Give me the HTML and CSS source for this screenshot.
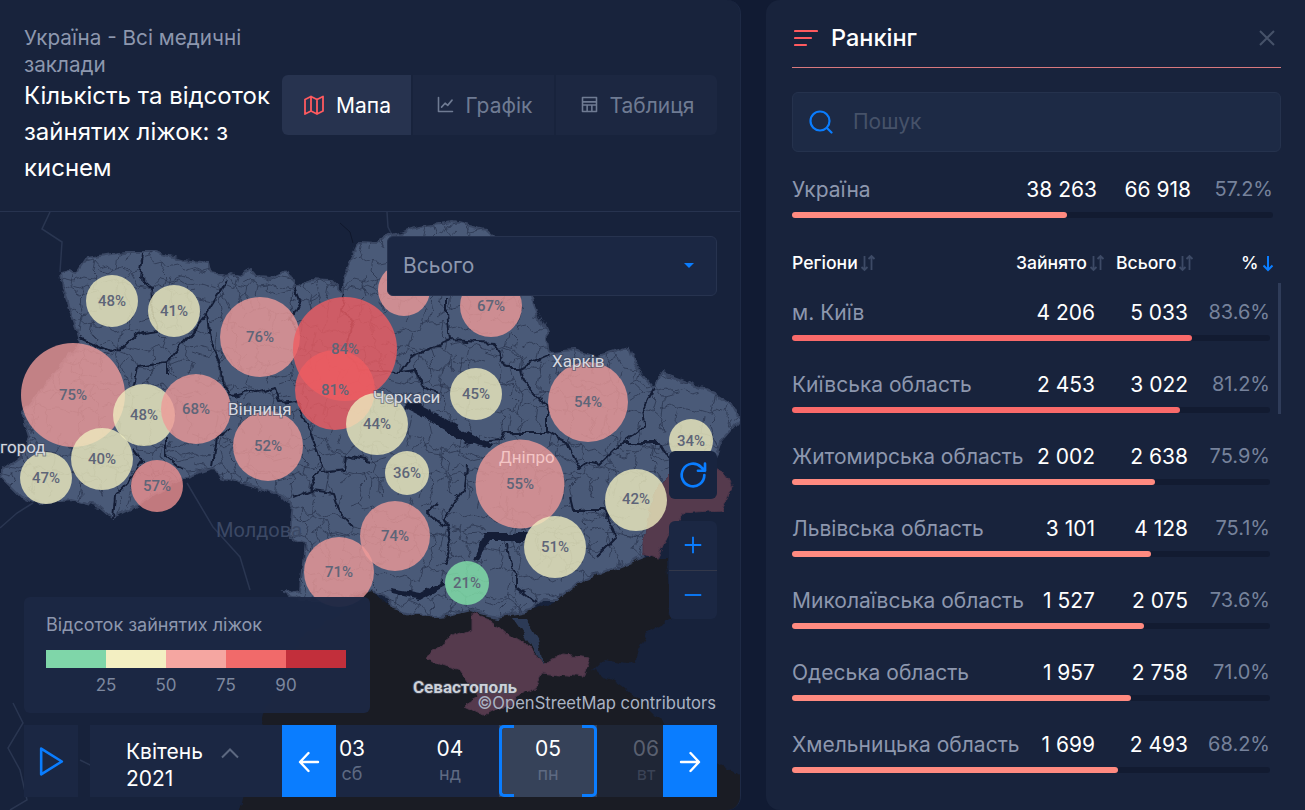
FILE: index.html
```html
<!DOCTYPE html>
<html lang="uk">
<head>
<meta charset="utf-8">
<title>Ранкінг</title>
<link rel="stylesheet" href="styles.css">
</head>
<body>
<div class="app">
  <section class="left">
    <header class="head">
      <div class="titles">
        <div class="crumb">Україна - Всі медичні заклади</div>
        <h1 class="title">Кількість та відсоток зайнятих ліжок: з киснем</h1>
      </div>
      <nav class="tabs">
        <div class="tab tab-on">
          <svg class="tab-ico" viewBox="0 0 24 24"><path d="M3 6.5 9 3.5l6 3 6-3v14.500l-6 3-6-3-6 3zM9 3.500v14.500M15 6.500v14.500"/></svg>Мапа
        </div>
        <div class="tab tab-graph">
          <svg class="tab-ico" viewBox="0 0 24 24"><path d="M4 4v16h16M7.500 15l4-4.500 3 2.500 5-6"/></svg>Графік
        </div>
        <div class="tab tab-table">
          <svg class="tab-ico" viewBox="0 0 24 24"><path d="M4 4h16v16H4zM4 9h16M4 12.500h16M9.300 12.500V20M14.700 12.500V20"/></svg>Таблиця
        </div>
      </nav>
    </header>
    <div class="map">
      <svg class="map-svg" viewBox="0 212 741 598">
        <defs>
          <pattern id="districts" width="70" height="62" patternUnits="userSpaceOnUse">
            <path d="M0 12l9-3 6 5 8-2 5 6 9-2 7 6 10-3 9 4 7-2M23 12l-2 11 6 6-3 10 7 6-2 11 5 6M0 38l10 3 7-4 7 3M31 35l9-3 8 5 9-1 13 4M48 37l-2 11 5 6-2 8M12 62l-2-10 5-5-3-9M58 12l3-12M12 0l-3 9M37 45l-6 5 1 12" fill="none" stroke="#2b3650" stroke-width=".8"/>
          </pattern>
          <pattern id="districts2" width="97" height="83" patternUnits="userSpaceOnUse">
            <path d="M0 20l12 4 9-6 13 5 7 13 14 2 8-9 12 3 10-4 12 3M21 18l3-18M55 38l-3 14 9 8 13-3 7 9-2 17M34 23l-9 11 4 14-11 5-18-4M29 48l8 13-5 22M61 60l-12 8M81 66l16-3M74 26l-3 14 10 6 16-4" fill="none" stroke="#2b3650" stroke-width=".8"/>
          </pattern>
          <filter id="rough" filterUnits="userSpaceOnUse" x="-20" y="190" width="790" height="640" color-interpolation-filters="sRGB">
            <feTurbulence type="fractalNoise" baseFrequency=".07" numOctaves="3" seed="4"/>
            <feDisplacementMap in="SourceGraphic" scale="9" xChannelSelector="R" yChannelSelector="G"/>
          </filter>
          <path id="ua" d="M60 272L68 270 78 273 88 258 123 252 157 252 182 260 208 263 210 272 227 275 232 273 240 275 250 269 258 278 270 279 287 271 295 288 310 279 330 280 345 295 343 277 360 242 377 243 383 238 418 227 453 222 486 230 520 260 533 300 547 333 550 352 573 350 597 357 628 348 633 362 653 387 663 373 687 382 713 393 732 405 740 420 720 443 712 466 680 468 665 490 650 540 643 557 617 567 583 580 557 600 543 600 530 610 517 613 497 617 487 615 470 610 450 615 423 617 393 608 385 595 373 590 345 600 300 600 283 593 300 590 305 543 290 537 293 503 267 490 220 477 213 467 183 477 130 510 113 518 100 507 72 500 37 503 20 497 0 477 3 470 20 457 30 437 23 413 80 343 75 325 62 287z"/>
        </defs>
        <path class="map-bound" d="M50 212L42 229 62 242 60 272M387 212L388 227 393 237M0 528L17 513 33 503M187 483L213 527 240 557 250 590M13 703L23 723 8 748 20 770 27 800 10 810M80 760L90 765 100 760"/>
        <path class="map-river-line" d="M340 223L350 232 353 243"/>
        <g filter="url(#rough)">
          <path class="map-black" d="M373 590L393 608 423 617 470 610 530 610 557 600 583 580 617 567 643 557 667 557 670 620 647 633 633 663 604 658 592 670 613 680 640 700 680 740 717 762 760 790 760 830 235 830 265 713 300 640z"/>
          <path class="map-occupied" d="M472 613L490 620 512 638 526 643 542 663 561 655 590 658 583 677 542 672 533 690 486 715 465 705 479 697 460 670 425 658 453 637 472 630z"/>
          <path class="map-strait" d="M512 618L527 640 543 664 538 640 525 618z"/>
          <use href="#ua" fill="#4a5a78" stroke="#3a4763" stroke-width="2"/>
          <use href="#ua" fill="url(#districts)"/>
          <use href="#ua" fill="url(#districts2)"/>
          <path class="map-occupied" d="M655 490L675 470 718 467 728 480 732 488 722 510 683 513 668 535 657 558 643 553 643 543 650 510z"/>
          <path class="map-regions" d="M143 253L140 278 153 290 150 310 158 330 143 332 133 337 123 347 110 352 80 338M227 280L215 300 207 313 210 340 222 368 223 383 233 397 275 387 280 402 297 400 303 418 310 430 322 467 310 490 293 497M207 313L167 362 137 367 132 387M167 362V375M167 437V457L183 470M217 437L213 465M233 428L217 437M113 518L115 497 133 477 143 462 133 450M322 473L345 470 347 455 370 460M310 490L333 493 340 513 353 527M447 297V313L450 340 410 357 400 372 415 370 422 387 440 393M450 340L493 343 508 368 520 368 550 355M520 368L523 380 540 397 547 413 547 433 503 433 500 440 470 443 457 437M547 433L567 443 580 468 587 462 600 465 623 443 645 427 643 407 653 387M623 443L660 443 670 460M467 467L465 487 443 520 448 533 450 547 443 563M570 497L573 510 603 510 617 537 597 557M507 543L510 567 517 573 517 587 537 603M437 503L427 513 445 528M295 288L300 300 290 320 300 335M345 295L340 310 355 320 345 350 360 370 400 372"/>
          <path class="map-water" d="M403 407L425 418 457 437 490 450 493 445 460 428 430 410 410 400zM483 533L527 533 525 541 490 541 478 560 473 562zM390 588L420 593 443 580 445 586 420 600 392 594z"/>
        </g>
        <circle class="blob blob-y" cx="112" cy="301" r="26"/>
        <circle class="blob blob-y" cx="174" cy="311" r="26"/>
        <circle class="blob blob-p" cx="260" cy="337" r="40"/>
        <circle class="blob blob-r" cx="345" cy="349" r="52"/>
        <circle class="blob blob-r" cx="335" cy="390" r="40"/>
        <circle class="blob blob-p" cx="73" cy="395" r="52"/>
        <circle class="blob blob-y" cx="144" cy="415" r="31"/>
        <circle class="blob blob-p" cx="196" cy="409" r="35"/>
        <circle class="blob blob-p" cx="268" cy="446" r="35"/>
        <circle class="blob blob-y" cx="102" cy="459" r="31"/>
        <circle class="blob blob-y" cx="46" cy="478" r="26"/>
        <circle class="blob blob-d" cx="157" cy="486" r="26"/>
        <circle class="blob blob-p" cx="339" cy="572" r="35"/>
        <circle class="blob blob-p" cx="404" cy="290" r="26"/>
        <circle class="blob blob-p" cx="491" cy="306" r="31"/>
        <circle class="blob blob-y" cx="476" cy="394" r="26"/>
        <circle class="blob blob-p" cx="588" cy="402" r="40"/>
        <circle class="blob blob-y" cx="377" cy="424" r="31"/>
        <circle class="blob blob-y" cx="407" cy="473" r="22"/>
        <circle class="blob blob-p" cx="520" cy="484" r="44.500"/>
        <circle class="blob blob-y" cx="691" cy="441" r="22"/>
        <circle class="blob blob-y" cx="636" cy="500" r="31"/>
        <circle class="blob blob-p" cx="395" cy="536" r="35"/>
        <circle class="blob blob-y" cx="555" cy="547" r="31"/>
        <circle class="blob blob-g" cx="467" cy="583" r="22"/>
        <text class="place" x="0" y="453">город</text>
        <text class="place" x="228" y="415">Вінниця</text>
        <text class="place" x="373" y="403">Черкаси</text>
        <text class="place" x="552" y="367">Харків</text>
        <text class="place place-under" x="499" y="463">Дніпро</text>
        <text class="place place-dim" x="216" y="537">Молдова</text>
        <text class="place place-bold" x="413" y="693">Севастополь</text>
        <g class="pcts">
          <text x="112" y="306">48%</text><text x="174" y="316">41%</text><text x="260" y="342">76%</text>
          <text x="345" y="354">84%</text><text x="335" y="395">81%</text><text x="73" y="400">75%</text>
          <text x="144" y="420">48%</text><text x="196" y="414">68%</text><text x="268" y="451">52%</text>
          <text x="102" y="464">40%</text><text x="46" y="483">47%</text><text x="157" y="491">57%</text>
          <text x="339" y="577">71%</text><text x="491" y="311">67%</text><text x="476" y="399">45%</text>
          <text x="588" y="407">54%</text><text x="377" y="429">44%</text><text x="407" y="478">36%</text>
          <text x="520" y="489">55%</text><text x="691" y="446">34%</text><text x="636" y="504">42%</text>
          <text x="395" y="541">74%</text><text x="555" y="552">51%</text><text x="467" y="588">21%</text>
        </g>
      </svg>

      <div class="select">Всього<span class="caret"></span></div>

      <div class="map-btn refresh">
        <svg viewBox="0 0 24 24"><path d="M20.500 12a8.500 8.500 0 1 1-2.500-6l3 2.800M21 3.500v5.300h-5.300"/></svg>
      </div>
      <div class="zoomer">
        <div class="zoom-btn"><svg viewBox="0 0 24 24"><path d="M12 3v18M3 12h18"/></svg></div>
        <div class="zoom-btn"><svg viewBox="0 0 24 24"><path d="M3 12h18"/></svg></div>
      </div>

      <div class="legend">
        <div class="legend-title">Відсоток зайнятих ліжок</div>
        <div class="legend-bar">
          <span class="seg seg-1"></span><span class="seg seg-2"></span><span class="seg seg-3"></span><span class="seg seg-4"></span><span class="seg seg-5"></span>
        </div>
        <div class="legend-nums"><span>25</span><span>50</span><span>75</span><span>90</span></div>
      </div>

      <div class="attrib">©OpenStreetMap contributors</div>

      <div class="dates">
        <div class="play"><svg viewBox="0 0 24 30"><path d="M2 2.500 22 15 2 27.500z"/></svg></div>
        <div class="month">
          <div class="month-text">Квітень<br>2021</div>
          <svg class="chev" viewBox="0 0 20 12"><path d="M2 10.500 10 2.500l8 8"/></svg>
        </div>
        <div class="arrow"><svg viewBox="0 0 24 24"><path d="M21 12H3.500M11.500 3 3 12l8.500 9"/></svg></div>
        <div class="strip">
          <div class="days">
            <div class="day"><b>03</b><span>сб</span></div>
            <div class="day"><b>04</b><span>нд</span></div>
            <div class="day day-on"><b>05</b><span>пн</span></div>
            <div class="day day-off"><b>06</b><span>вт</span></div>
          </div>
        </div>
        <div class="arrow"><svg viewBox="0 0 24 24"><path d="M3 12h17.500M12.500 3l8.500 9-8.500 9"/></svg></div>
      </div>
    </div>
  </section>

  <aside class="right">
    <div class="r-head">
      <svg class="r-ico" viewBox="0 0 24 18"><path d="M1 2h22M1 9h16M1 16h11"/></svg>
      <h2 class="r-title">Ранкінг</h2>
      <svg class="r-close" viewBox="0 0 16 16"><path d="M1 1l14 14M15 1 1 15"/></svg>
    </div>
    <div class="search">
      <svg class="search-ico" viewBox="0 0 24 24"><circle cx="11" cy="11" r="9.500"/><path d="M18 18l4.500 4.500"/></svg>
      <span>Пошук</span>
    </div>

    <div class="total">
      <div class="row row-total">
        <span class="r-name">Україна</span><span class="r-num">38 263</span><span class="r-num">66 918</span><span class="r-pct">57.2%</span>
      </div>
      <div class="track"><div class="fill fill-soft" style="width:57.2%"></div></div>
    </div>

    <div class="cols">
      <span class="col col-name">Регіони<svg class="sort" viewBox="0 0 16 18"><path d="M4.500 2v14M1.500 13l3 3 3-3M11.500 16V2M8.500 5l3-3 3 3"/></svg></span>
      <span class="col col-busy">Зайнято<svg class="sort" viewBox="0 0 16 18"><path d="M4.500 2v14M1.500 13l3 3 3-3M11.500 16V2M8.500 5l3-3 3 3"/></svg></span>
      <span class="col col-all">Всього<svg class="sort" viewBox="0 0 16 18"><path d="M4.500 2v14M1.500 13l3 3 3-3M11.500 16V2M8.500 5l3-3 3 3"/></svg></span>
      <span class="col col-pct">%<svg class="sort sort-on" viewBox="0 0 16 18"><path d="M8 2v14M3.500 11.500 8 16l4.500-4.500"/></svg></span>
    </div>

    <div class="list">
      <div class="scrollbar"></div>
      <div class="item"><div class="row"><span class="r-name">м. Київ</span><span class="r-num">4 206</span><span class="r-num">5 033</span><span class="r-pct">83.6%</span></div><div class="track"><div class="fill" style="width:83.6%"></div></div></div>
      <div class="item"><div class="row"><span class="r-name">Київська область</span><span class="r-num">2 453</span><span class="r-num">3 022</span><span class="r-pct">81.2%</span></div><div class="track"><div class="fill" style="width:81.2%"></div></div></div>
      <div class="item"><div class="row"><span class="r-name">Житомирська область</span><span class="r-num">2 002</span><span class="r-num">2 638</span><span class="r-pct">75.9%</span></div><div class="track"><div class="fill fill-soft" style="width:75.9%"></div></div></div>
      <div class="item"><div class="row"><span class="r-name">Львівська область</span><span class="r-num">3 101</span><span class="r-num">4 128</span><span class="r-pct">75.1%</span></div><div class="track"><div class="fill fill-soft" style="width:75.1%"></div></div></div>
      <div class="item"><div class="row"><span class="r-name">Миколаївська область</span><span class="r-num">1 527</span><span class="r-num">2 075</span><span class="r-pct">73.6%</span></div><div class="track"><div class="fill fill-soft" style="width:73.6%"></div></div></div>
      <div class="item"><div class="row"><span class="r-name">Одеська область</span><span class="r-num">1 957</span><span class="r-num">2 758</span><span class="r-pct">71.0%</span></div><div class="track"><div class="fill fill-soft" style="width:71%"></div></div></div>
      <div class="item"><div class="row"><span class="r-name">Хмельницька область</span><span class="r-num">1 699</span><span class="r-num">2 493</span><span class="r-pct">68.2%</span></div><div class="track"><div class="fill fill-soft" style="width:68.2%"></div></div></div>
    </div>
  </aside>
</div>
</body>
</html>
```

FILE: styles.css
```css
* { box-sizing: border-box; }
html, body { margin: 0; height: 100%; overflow: hidden; }
body { background: #111b33; font-family: Inter, "Noto Sans", sans-serif; color: #fff; }
.app { display: flex; width: 1305px; height: 810px; gap: 25px; }

/* left panel */
.left { width: 741px; height: 810px; display: flex; flex-direction: column; background: #18233c; border-radius: 0 14px 14px 0; overflow: hidden; border-right: 1px solid #1e2a45; }
.head { height: 212px; flex: none; display: flex; align-items: center; padding: 0 24px 2px; border-bottom: 1px solid #27334f; }
.titles { width: 258px; flex: none; }
.crumb { font-size: 20.700px; line-height: 27px; color: #8d97ae; }
.title { margin: 0; font-size: 24px; font-weight: 400; line-height: 36px; color: #fff; }
.tabs { display: flex; gap: 2px; height: 60px; }
.tab { display: flex; align-items: center; justify-content: center; gap: 10px; padding-top: 2px; font-size: 21px; color: #6f7b93; background: #1c2741; }
.tab-on { width: 129px; background: #27334f; color: #fff; border-radius: 6px 0 0 6px; }
.tab-graph { width: 141px; }
.tab-table { width: 161px; border-radius: 0 6px 6px 0; }
.tab-ico { width: 24px; height: 24px; margin-top: -2px; fill: none; stroke: #6f7b93; stroke-width: 1.800; stroke-linejoin: round; stroke-linecap: round; }
.tab-on .tab-ico { stroke: #ff5a5f; }
.tab-graph .tab-ico, .tab-table .tab-ico { width: 21px; height: 21px; }

/* map */
.map { position: relative; flex: 1; background: #17223b; overflow: hidden; }
.map-svg { position: absolute; left: 0; top: 0; width: 741px; height: 598px; display: block; }
.map-bound { fill: none; stroke: #2a3651; stroke-width: 1.500; }
.map-river-line { fill: none; stroke: #0f172b; stroke-width: 1; }
.map-black { fill: #1a1c24; }
.map-occupied { fill: #553a4d; stroke: #4c3549; }
.map-strait { fill: #2c3a56; }
.map-regions { fill: none; stroke: #141d36; stroke-width: 2; stroke-linejoin: round; }
.map-water { fill: #141d36; }
.blob { opacity: .8; }
.blob-y { fill: #efecbf; }
.blob-p { fill: #ee9a98; }
.blob-d { fill: #ec9090; }
.blob-r { fill: #ef5c61; }
.blob-g { fill: #83e3aa; }
.place { font-family: Roboto, sans-serif; font-size: 17px; fill: #d6d9e0; paint-order: stroke; stroke: rgba(60,70,90,.55); stroke-width: 2px; }
.place-under { fill: #f3c5c5; stroke: none; }
.place-dim { font-size: 20px; fill: #3c4965; stroke: none; }
.place-bold { font-weight: 700; font-size: 17px; fill: #cdd1d9; stroke: rgba(70,75,90,.7); }
.pcts text { font-family: Roboto, sans-serif; font-size: 15px; font-weight: 500; text-anchor: middle; fill: #5e6578; }

.select { position: absolute; left: 387px; top: 24px; width: 330px; height: 60px; display: flex; align-items: center; justify-content: space-between; padding: 0 22px 2px 15px; background: #1b2743; border: 1px solid #27334f; border-radius: 6px; font-size: 21px; color: #8d97ae; }
.caret { width: 0; height: 0; border-left: 5px solid transparent; border-right: 5px solid transparent; border-top: 5px solid #0a7dff; }
.map-btn { position: absolute; left: 669px; top: 239px; width: 48px; height: 48px; display: flex; align-items: center; justify-content: center; background: #18243f; border-radius: 6px; }
.map-btn svg { width: 32px; height: 32px; fill: none; stroke: #0a7dff; stroke-width: 2; stroke-linecap: round; stroke-linejoin: round; }
.zoomer { position: absolute; left: 669px; top: 309px; width: 48px; height: 98px; background: #1b2743; border-radius: 6px; display: flex; flex-direction: column; }
.zoom-btn { flex: 1; display: flex; align-items: center; justify-content: center; }
.zoom-btn + .zoom-btn { border-top: 1px solid #33384a; }
.zoom-btn svg { width: 22px; height: 22px; fill: none; stroke: #0a7dff; stroke-width: 2; }

.legend { position: absolute; left: 24px; top: 385px; width: 346px; height: 116px; padding: 16px 22px; background: rgba(28,40,68,.96); border-radius: 6px; }
.legend-title { font-size: 18px; line-height: 24px; color: #8d97ae; }
.legend-bar { display: flex; height: 18px; width: 300px; margin-top: 13px; }
.seg { flex: 1; }
.seg-1 { background: #7fd6a9; }
.seg-2 { background: #f3efc2; }
.seg-3 { background: #f5a6a1; }
.seg-4 { background: #f16a6a; }
.seg-5 { background: #c22f3b; }
.legend-nums { display: flex; width: 240px; margin-left: 30px; margin-top: 6px; font-size: 17px; line-height: 22px; color: #7d889f; }
.legend-nums span { flex: 1; text-align: center; }
.attrib { position: absolute; right: 24px; top: 480px; font-size: 16.600px; line-height: 22px; color: #aab3c3; }

.dates { position: absolute; left: 24px; top: 513px; width: 693px; height: 72px; display: flex; }
.play { width: 54px; margin-right: 12px; background: #1b2743; display: flex; align-items: center; justify-content: center; }
.play svg { width: 25px; height: 31px; fill: none; stroke: #0a7dff; stroke-width: 2.500; stroke-linejoin: round; }
.month { width: 192px; padding: 8px 0 0 36px; display: flex; align-items: center; gap: 17px; background: #1b2743; }
.month-text { font-size: 21px; line-height: 27px; color: #fff; }
.chev { width: 20px; height: 12px; margin-top: -24px; fill: none; stroke: #5c6880; stroke-width: 2; }
.arrow { width: 54px; padding-top: 2px; background: #0a7dff; display: flex; align-items: center; justify-content: center; flex: none; }
.arrow svg { width: 24px; height: 24px; fill: none; stroke: #fff; stroke-width: 2.400; stroke-linecap: round; stroke-linejoin: round; }
.strip { width: 327px; overflow: hidden; background: #1b2743; }
.days { display: flex; margin-left: -33px; height: 100%; }
.day { width: 98px; flex: none; position: relative; display: flex; flex-direction: column; align-items: center; justify-content: center; }
.day b { font-weight: 400; font-size: 21px; line-height: 26px; color: #fff; }
.day span { font-size: 18px; line-height: 24px; color: #5e6a82; }
.day-on { background: #364259; }
.day-on::before, .day-on::after { content: ""; position: absolute; top: 0; bottom: 0; width: 12px; border: 3px solid #0a7dff; }
.day-on::before { left: 0; border-right: 0; border-radius: 5px 0 0 5px; }
.day-on::after { right: 0; border-left: 0; border-radius: 0 5px 5px 0; }
.day-off { background: #1f2636; }
.day-off b { color: #5a6070; }
.day-off span { color: #3b4356; }

/* right panel */
.right { width: 539px; height: 810px; padding: 0 24px 0 26px; background: #18233c; border-radius: 14px 0 0 14px; display: flex; flex-direction: column; }
.r-head { height: 68px; flex: none; display: flex; align-items: center; padding: 9px 6px 0 2px; border-bottom: 1px solid #d9797e; }
.r-ico { width: 24px; height: 18px; fill: none; stroke: #ff5a5f; stroke-width: 2.200; stroke-linecap: round; }
.r-title { margin: 0 0 0 13px; font-size: 23.500px; font-weight: 500; line-height: 30px; flex: 1; }
.r-close { width: 16px; height: 16px; fill: none; stroke: #465269; stroke-width: 2; }
.search { height: 60px; margin-top: 24px; flex: none; display: flex; align-items: center; gap: 20px; padding: 0 0 1px 16px; background: #1d2a45; border: 1px solid #25324d; border-radius: 6px; font-size: 21px; color: #465269; }
.search-ico { width: 24px; height: 24px; fill: none; stroke: #0a7dff; stroke-width: 2.200; stroke-linecap: round; }

.total { margin-top: 24px; width: 481px; }
.row { display: grid; grid-template-columns: minmax(0, 1fr) 93px 93px 82px; height: 28px; padding-bottom: 2px; align-items: center; font-size: 21px; }
.row-total { grid-template-columns: minmax(0, 1fr) 94px 94px 82px; }
.r-name { color: #8d97ae; white-space: nowrap; }
.r-num { color: #fff; text-align: right; }
.r-pct { color: #76829b; text-align: right; font-size: 20px; }
.track { height: 6px; margin-top: 8px; background: #121b31; border-radius: 3px; }
.fill { height: 6px; background: #f96a6a; border-radius: 3px; }
.fill-soft { background: #ff8a80; }

.cols { position: relative; height: 24px; margin-top: 33px; margin-bottom: -1px; flex: none; font-size: 17.600px; font-weight: 500; }
.col { position: absolute; top: 0; line-height: 24px; display: flex; align-items: center; }
.col-name { left: 0; }
.col-busy { left: 224px; }
.col-all { left: 324px; }
.col-pct { left: 449px; }
.sort { width: 16px; height: 18px; margin-left: 2px; fill: none; stroke: #3d4a66; stroke-width: 1.800; }
.sort-on { stroke: #0a7dff; stroke-width: 2; margin-left: 2px; }

.list { position: relative; margin-top: 9px; width: 489px; }
.scrollbar { position: absolute; right: 0; top: 0; width: 3px; height: 131px; background: #2f3c59; }
.item { width: 478px; height: 72px; padding-top: 16px; }
```
